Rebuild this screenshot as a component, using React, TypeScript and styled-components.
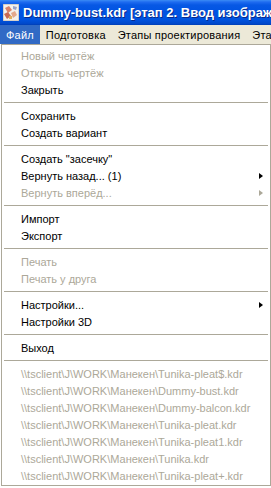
import React from 'react';
import styled, { createGlobalStyle } from 'styled-components';

const GlobalStyle = createGlobalStyle`
  html, body {
    margin: 0;
    padding: 0;
    background: #ffffff;
  }
  body {
    width: 271px;
    height: 488px;
    overflow: hidden;
    font-family: "Liberation Sans", Arial, sans-serif;
  }
`;

interface MenuEntry {
  label?: string;
  disabled?: boolean;
  submenu?: boolean;
  separator?: boolean;
}

const entries: MenuEntry[] = [
  { label: 'Новый чертёж', disabled: true },
  { label: 'Открыть чертёж', disabled: true },
  { label: 'Закрыть' },
  { separator: true },
  { label: 'Сохранить' },
  { label: 'Создать вариант' },
  { separator: true },
  { label: 'Создать "засечку"' },
  { label: 'Вернуть назад... (1)', submenu: true },
  { label: 'Вернуть вперёд...', disabled: true, submenu: true },
  { separator: true },
  { label: 'Импорт' },
  { label: 'Экспорт' },
  { separator: true },
  { label: 'Печать', disabled: true },
  { label: 'Печать у друга', disabled: true },
  { separator: true },
  { label: 'Настройки...', submenu: true },
  { label: 'Настройки 3D' },
  { separator: true },
  { label: 'Выход' },
  { separator: true },
  { label: '\\\\tsclient\\J\\WORK\\Манекен\\Tunika-pleat$.kdr', disabled: true },
  { label: '\\\\tsclient\\J\\WORK\\Манекен\\Dummy-bust.kdr', disabled: true },
  { label: '\\\\tsclient\\J\\WORK\\Манекен\\Dummy-balcon.kdr', disabled: true },
  { label: '\\\\tsclient\\J\\WORK\\Манекен\\Tunika-pleat.kdr', disabled: true },
  { label: '\\\\tsclient\\J\\WORK\\Манекен\\Tunika-pleat1.kdr', disabled: true },
  { label: '\\\\tsclient\\J\\WORK\\Манекен\\Tunika.kdr', disabled: true },
  { label: '\\\\tsclient\\J\\WORK\\Манекен\\Tunika-pleat+.kdr', disabled: true },
];

const menuBarItems = ['Файл', 'Подготовка', 'Этапы проектирования', 'Этапы'];

const Window = styled.div`
  display: flex;
  flex-direction: column;
  width: 271px;
  height: 488px;
`;

const TitleBar = styled.div`
  height: 25px;
  display: flex;
  align-items: center;
  gap: 4px;
  padding-left: 3px;
  background: linear-gradient(
    to bottom,
    #3b8cf5 0px,
    #1f6cf0 2px,
    #0758e4 5px,
    #0054e3 12px,
    #0052dd 20px,
    #0047c8 24px,
    #003cb0 25px
  );
  overflow: hidden;
  white-space: nowrap;
`;

const TitleText = styled.span`
  color: #ffffff;
  font-family: "Liberation Sans", Arial, sans-serif;
  font-weight: bold;
  font-size: 13px;
  text-shadow: 1px 1px 0 #0a2a8a;
`;

const AppIcon = styled.svg`
  flex: none;
  width: 16px;
  height: 17px;
`;

const MenuBar = styled.div`
  height: 19px;
  display: flex;
  background: #ece9d8;
  overflow: hidden;
  white-space: nowrap;
`;

const MenuBarItem = styled.div<{ $active?: boolean }>`
  display: flex;
  align-items: center;
  padding: 0 6px;
  font-size: 11px;
  letter-spacing: 0.2px;
  color: ${({ $active }) => ($active ? '#ffffff' : '#000000')};
  background: ${({ $active }) => ($active ? '#316ac5' : 'transparent')};
`;

const Dropdown = styled.div`
  margin-left: 1px;
  width: 266px;
  border: 1px solid #aca899;
  background: #ffffff;
  padding: 2px 1px 1px 1px;
  display: flex;
  flex-direction: column;
`;

const Item = styled.div<{ $disabled?: boolean }>`
  height: 17px;
  display: flex;
  align-items: center;
  justify-content: space-between;
  padding: 0 6px 0 18px;
  font-size: 11px;
  white-space: nowrap;
  color: ${({ $disabled }) => ($disabled ? '#aca899' : '#000000')};
`;

const Separator = styled.div`
  height: 9px;
  display: flex;
  align-items: center;
  padding: 0 1px;

  &::after {
    content: '';
    flex: 1;
    height: 1px;
    background: #aca899;
  }
`;

const Arrow = styled.span<{ $disabled?: boolean }>`
  width: 0;
  height: 0;
  border-top: 3.5px solid transparent;
  border-bottom: 3.5px solid transparent;
  border-left: 4px solid ${({ $disabled }) => ($disabled ? '#aca899' : '#000000')};
`;

const App: React.FC = () => {
  return (
    <>
      <GlobalStyle />
      <Window>
        <TitleBar>
          <AppIcon viewBox="0 0 16 17">
            <rect x="0" y="0" width="16" height="17" fill="#f4f1ec" />
            <rect x="0" y="0" width="16" height="17" fill="none" stroke="#b8b0a8" strokeWidth="1" />
            <path d="M2 4 L6 2 L9 6 L5 9 Z" fill="#d9826a" />
            <path d="M1 10 L5 8 L8 12 L4 15 Z" fill="#c86a55" />
            <path d="M8 9 L12 7 L14 11 L10 14 Z" fill="#e3a88c" />
            <path d="M10 2 L14 3 L13 6 L10 5 Z" fill="#9aa3c9" />
            <rect x="6" y="12" width="3" height="3" fill="#e0b060" />
          </AppIcon>
          <TitleText>Dummy-bust.kdr [этап 2. Ввод изображения]</TitleText>
        </TitleBar>
        <MenuBar>
          {menuBarItems.map((m, i) => (
            <MenuBarItem key={m} $active={i === 0}>
              {m}
            </MenuBarItem>
          ))}
        </MenuBar>
        <Dropdown>
          {entries.map((e, i) =>
            e.separator ? (
              <Separator key={i} />
            ) : (
              <Item key={i} $disabled={e.disabled}>
                <span>{e.label}</span>
                {e.submenu && <Arrow $disabled={e.disabled} />}
              </Item>
            )
          )}
        </Dropdown>
      </Window>
    </>
  );
};

export default App;
